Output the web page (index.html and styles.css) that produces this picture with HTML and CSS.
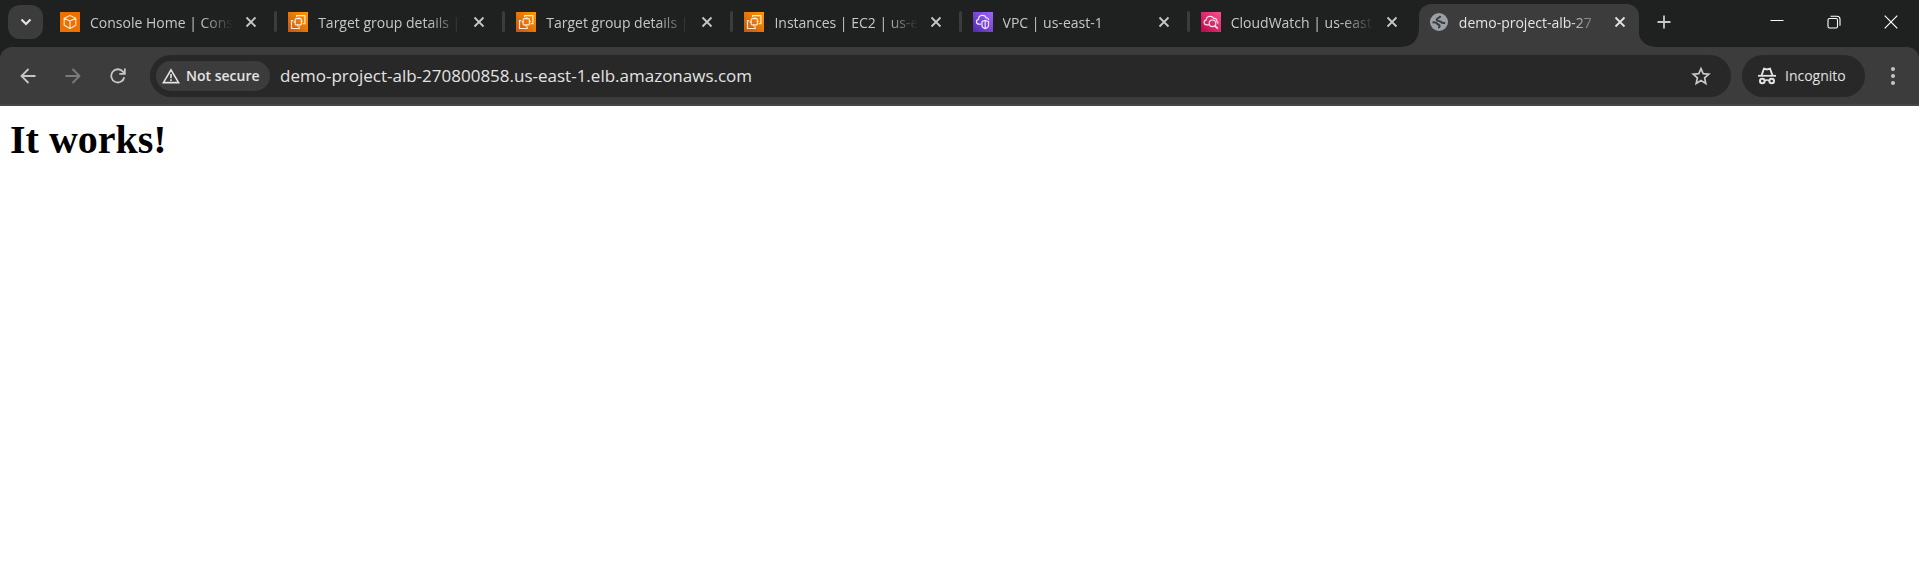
FILE: index.html
```html
<!DOCTYPE html>
<html lang="en">
<head>
<meta charset="utf-8">
<title>demo-project-alb-270800858.us-east-1.elb.amazonaws.com</title>
<link rel="stylesheet" href="styles.css">
</head>
<body>
<svg class="defs" aria-hidden="true">
  <defs>
    <linearGradient id="orange" x1="0" y1="1" x2="1" y2="0"><stop offset="0" stop-color="#cb5314"/><stop offset="1" stop-color="#ff9900"/></linearGradient>
    <linearGradient id="purple" x1="0" y1="1" x2="1" y2="0"><stop offset="0" stop-color="#4f29ab"/><stop offset="1" stop-color="#a166ff"/></linearGradient>
    <linearGradient id="pink" x1="0" y1="1" x2="1" y2="0"><stop offset="0" stop-color="#b4094f"/><stop offset="1" stop-color="#ff4f8b"/></linearGradient>
    <symbol id="close" viewBox="0 0 12 12"><path d="M1.500 1.500l9 9M10.500 1.500l-9 9" fill="none" stroke="currentColor" stroke-width="1.800"/></symbol>
    <symbol id="console" viewBox="0 0 20 20"><path fill="#ed7100" d="M0 0h20v20H0z"/><path d="M10 3.500l5.800 2.700v7L10 16.500l-5.800-3.300v-7zM4.200 6.200L10 9l5.800-2.800M10 9v7.500" fill="none" stroke="#ffe3c5" stroke-width="1.200" stroke-linejoin="round"/></symbol>
    <symbol id="ec2" viewBox="0 0 20 20"><path fill="url(#orange)" d="M0 0h20v20H0z"/><g fill="none" stroke="#ffead0" stroke-width="1.200"><rect x="7.200" y="6.700" width="6.200" height="6.200" rx="1"/><path d="M8.600 5.200V3.600h8.300v8h-2.200M5.200 8.700H3.500v7.800h7.700v-2M10.800 5.200v1.500M5.600 9.800h1.600M13.400 9.500h1.500M10 12.900v1.600"/></g></symbol>
    <symbol id="vpc" viewBox="0 0 20 20"><path fill="url(#purple)" d="M0 0h20v20H0z"/><g fill="none" stroke="#efe3ff" stroke-width="1.200"><path d="M8 12.200H6c-3.300-.2-3.300-4.400-.5-4.900.1-4.900 6.600-5 7.700-1.300 1.500-.3 2.400.6 2.400 2"/><path d="M12.200 8.500l3.300 1v4.200c0 1.400-1.500 2.200-3.300 3-1.800-.8-3.200-1.600-3.200-3V9.500zM12.200 8.500v8"/></g></symbol>
    <symbol id="watch" viewBox="0 0 20 20"><path fill="url(#pink)" d="M0 0h20v20H0z"/><g fill="none" stroke="#ffe0eb" stroke-width="1.200"><path d="M8 12.800H5.700c-3.300-.2-3.300-4.500-.4-5 .1-4.400 6.300-4.500 7.500-1.200 2-.6 3.300.9 3 2.700 1 .5 1.300 1.300 1 2.300"/><circle cx="11.500" cy="11.300" r="3.300"/><path d="M13.800 13.700l3 2.900" stroke-width="1.700"/></g></symbol>
    <symbol id="globe" viewBox="0 0 18 18"><circle cx="9" cy="9" r="9" fill="#9aa0a6"/><path d="M11 2.300C10.600 4 9 4.300 7.500 4.700 5.800 5.200 5.500 7.200 7 7.900c1.200.5 2.600.2 3.500.7.900.6 1.100 1.900 2.500 1.900 1.100 0 1.600-.7 2.800-.6A7 7 0 0 0 11 2.300z" fill="#9aa0a6"/><path d="M10.500 3.200C9.800 5 6.800 4.700 6.600 6.600 6.500 8.200 9.300 7.600 10.600 8.600c1 .9 1.300 1.900 4.600 1.100M2.500 9.500c2.500-.4 4 .2 4.800 1.300.8 1.200 2.700.9 2.300 2.400-.2.800-.8 1.200-.6 2.100" fill="none" stroke="#3c3c3c" stroke-width="2"/></symbol>
  </defs>
</svg>
<header class="browser">
  <div class="strip">
    <button class="search" aria-label="Search tabs"><svg width="12" height="8" viewBox="0 0 12 8"><path d="M1.500 1.500L6 6l4.500-4.500" fill="none" stroke="currentColor" stroke-width="2.200"/></svg></button>
    <nav class="tabs" aria-label="Tabs">
      <div class="tab"><svg class="icon"><use href="#console"/></svg><a class="title" href="#">Console Home | Cons</a><button class="shut" aria-label="Close tab"><svg width="12" height="12"><use href="#close"/></svg></button></div>
      <div class="tab"><svg class="icon"><use href="#ec2"/></svg><a class="title" href="#">Target group details |</a><button class="shut" aria-label="Close tab"><svg width="12" height="12"><use href="#close"/></svg></button></div>
      <div class="tab"><svg class="icon"><use href="#ec2"/></svg><a class="title" href="#">Target group details |</a><button class="shut" aria-label="Close tab"><svg width="12" height="12"><use href="#close"/></svg></button></div>
      <div class="tab"><svg class="icon"><use href="#ec2"/></svg><a class="title" href="#">Instances | EC2 | us-e</a><button class="shut" aria-label="Close tab"><svg width="12" height="12"><use href="#close"/></svg></button></div>
      <div class="tab"><svg class="icon"><use href="#vpc"/></svg><a class="title" href="#">VPC | us-east-1</a><button class="shut" aria-label="Close tab"><svg width="12" height="12"><use href="#close"/></svg></button></div>
      <div class="tab last"><svg class="icon"><use href="#watch"/></svg><a class="title" href="#">CloudWatch | us-east</a><button class="shut" aria-label="Close tab"><svg width="12" height="12"><use href="#close"/></svg></button></div>
      <div class="tab active"><svg class="icon globe"><use href="#globe"/></svg><a class="title" href="#" aria-current="page">demo-project-alb-27</a><button class="shut" aria-label="Close tab"><svg width="12" height="12"><use href="#close"/></svg></button></div>
    </nav>
    <button class="new" aria-label="New tab"><svg width="14" height="14" viewBox="0 0 14 14"><path d="M7 .5v13M.5 7h13" stroke="currentColor" stroke-width="1.800"/></svg></button>
    <div class="window">
      <button class="control" aria-label="Minimize"><svg width="14" height="14" viewBox="0 0 14 14"><path d="M.5 5.500h13" stroke="currentColor"/></svg></button>
      <button class="control" aria-label="Restore"><svg width="14" height="14" viewBox="0 0 14 14"><g fill="none" stroke="currentColor" stroke-width="1.100"><rect x="1" y="3.500" width="9.500" height="9.500" rx="1.500"/><path d="M3.500 1.200H10c2 0 3 1 3 3v6.500"/></g></svg></button>
      <button class="control" aria-label="Close"><svg width="14" height="14" viewBox="0 0 14 14"><path d="M.7.700l12.600 12.600M13.300.7L.7 13.300" stroke="currentColor" stroke-width="1.200"/></svg></button>
    </div>
  </div>
  <div class="toolbar">
    <div class="moves">
      <button class="move" aria-label="Back"><svg width="16" height="16" viewBox="0 0 16 16"><path d="M15.500 8H2M8.500 1L1.500 8l7 7" fill="none" stroke="currentColor" stroke-width="1.800"/></svg></button>
      <button class="move" aria-label="Forward" disabled><svg width="16" height="16" viewBox="0 0 16 16"><path d="M.5 8H14M7.500 1l7 7-7 7" fill="none" stroke="currentColor" stroke-width="1.800"/></svg></button>
      <button class="move" aria-label="Reload"><svg width="16" height="16" viewBox="0 0 16 16"><path d="M14.300 9.300A6.600 6.600 0 1 1 13 3.700L14.500 5.500M14.800.5v5.300H9.300" fill="none" stroke="currentColor" stroke-width="1.800"/></svg></button>
    </div>
    <form class="omnibox">
      <button class="chip" type="button"><svg width="18" height="16" viewBox="0 0 18 16"><path d="M9 1.800L16.600 14.600H1.400z" fill="none" stroke="currentColor" stroke-width="1.600"/><path d="M9 6v4.200M9 11.200v1.700" stroke="currentColor" stroke-width="1.600"/></svg>Not secure</button>
      <input class="address" type="text" aria-label="Address" value="demo-project-alb-270800858.us-east-1.elb.amazonaws.com">
      <button class="star" type="button" aria-label="Bookmark this page"><svg width="20" height="20" viewBox="0 0 20 20"><path d="M10 2.600l2.200 5.100 5.600.5-4.200 3.700 1.200 5.500L10 14.500l-4.800 2.900 1.200-5.500-4.200-3.700 5.600-.5z" fill="none" stroke="currentColor" stroke-width="1.700"/></svg></button>
    </form>
    <button class="incognito"><svg width="20" height="18" viewBox="0 0 20 18"><g fill="none" stroke="currentColor" stroke-width="2"><path d="M1 8.800h18" stroke-width="1.800"/><path d="M4.500 8.500L7 1.600l3 .8 3-.8 2.500 6.900" stroke-width="1.900"/><circle cx="5.300" cy="14" r="2.300"/><circle cx="14.700" cy="14" r="2.300"/><path d="M7.500 13.800q2.500-1.500 5 0" stroke-width="1.500"/></g></svg>Incognito</button>
    <button class="menu" aria-label="Menu"><svg width="4" height="18" viewBox="0 0 4 18"><g fill="currentColor"><circle cx="2" cy="2" r="2"/><circle cx="2" cy="9" r="2"/><circle cx="2" cy="16" r="2"/></g></svg></button>
  </div>
</header>
<main class="page"><h1 class="heading">It works!</h1></main>
</body>
</html>
```

FILE: styles.css
```css
* { box-sizing: border-box; }

body {
  margin: 0;
  background: #fff;
}

.defs {
  position: absolute;
  width: 0;
  height: 0;
}

.browser {
  background: #1f2120;
  color: #c7c7c7;
  font-family: "Open Sans", "Noto Sans", sans-serif;
  font-size: 14px;
}

.browser button {
  display: flex;
  align-items: center;
  justify-content: center;
  flex: none;
  padding: 0;
  border: 0;
  background: none;
  color: inherit;
  font: inherit;
}

.strip {
  display: flex;
  height: 47px;
  padding-left: 8px;
}

.browser .search {
  width: 35px;
  height: 34px;
  margin: 5px 5px 0 0;
  border-radius: 12px;
  background: #3c3c3c;
  color: #e3e3e3;
}

.tabs {
  display: flex;
  flex: 0 1 1597px;
  min-width: 0;
}

.tab {
  display: flex;
  align-items: center;
  flex: 1 1 0;
  min-width: 0;
  position: relative;
  padding: 0 13px 3px 12px;
}

.tab:not(.active):not(.last)::after {
  content: "";
  position: absolute;
  right: -1px;
  top: 11px;
  width: 3px;
  height: 21px;
  border-radius: 2px;
  background: #3c3c3c;
}

.icon {
  flex: none;
  width: 20px;
  height: 20px;
}

.globe {
  width: 18px;
  height: 18px;
  margin: 0 1px;
}

.title {
  flex: 1;
  min-width: 0;
  margin-left: 10px;
  overflow: hidden;
  color: inherit;
  line-height: 24px;
  padding-top: 1px;
  text-decoration: none;
  white-space: nowrap;
  -webkit-mask-image: linear-gradient(to right, #000 calc(100% - 32px), transparent);
  mask-image: linear-gradient(to right, #000 calc(100% - 32px), transparent);
}

.browser .shut {
  width: 24px;
  height: 24px;
  margin-left: 6px;
}

.active {
  color: #e3e3e3;
}

.active::before {
  content: "";
  position: absolute;
  inset: 4px 6px 0 2px;
  border-radius: 12px 12px 0 0;
  background: #3c3c3c;
}

.active::after {
  content: "";
  position: absolute;
  left: -14px;
  right: -9px;
  bottom: 0;
  height: 16px;
  background:
    radial-gradient(circle at 0 0, transparent 15px, #3c3c3c 16px) left / 16px 16px no-repeat,
    radial-gradient(circle at 100% 0, transparent 15px, #3c3c3c 16px) right / 16px 16px no-repeat;
}

.active > * {
  position: relative;
  z-index: 1;
}

.browser .new {
  width: 38px;
  height: 44px;
}

.window {
  display: flex;
  flex: none;
  margin-left: auto;
  color: #fff;
}

.browser .control {
  width: 57px;
  height: 43px;
}

.toolbar {
  display: flex;
  align-items: center;
  height: 59px;
  padding: 0 14px 0 10px;
  border-bottom: 2px solid #474545;
  border-radius: 12px 12px 0 0;
  background: #3c3c3c;
}

.moves {
  display: flex;
  gap: 9px;
  margin-right: 14px;
}

.browser .move {
  width: 36px;
  height: 36px;
}

.browser .move:disabled {
  color: #7c7c7c;
}

.omnibox {
  display: flex;
  align-items: center;
  flex: 1;
  min-width: 0;
  height: 42px;
  padding: 0 18px 0 6px;
  border-radius: 21px;
  background: #282828;
}

.browser .chip {
  justify-content: flex-start;
  gap: 6px;
  width: 114px;
  height: 30px;
  padding-left: 6px;
  border-radius: 15px;
  background: #3c3c3c;
  color: #e3e3e3;
  font-weight: 600;
}

.address {
  flex: 1;
  min-width: 0;
  height: 30px;
  margin: 0;
  padding: 0 0 0 10px;
  border: 0;
  background: none;
  color: #e3e3e3;
  font: 17px "Open Sans", "Noto Sans", sans-serif;
}

.browser .star {
  width: 24px;
  height: 30px;
}

.browser .incognito {
  gap: 8px;
  justify-content: flex-start;
  width: 123px;
  height: 42px;
  margin-left: 11px;
  padding-left: 15px;
  border-radius: 21px;
  background: #282828;
  color: #e3e3e3;
}

.browser .menu {
  width: 24px;
  height: 36px;
  margin-left: 16px;
}

.page {
  padding: 10px;
}

.heading {
  margin: 0;
  color: #000;
  font: bold 40px "Liberation Serif", "Times New Roman", serif;
}
```
